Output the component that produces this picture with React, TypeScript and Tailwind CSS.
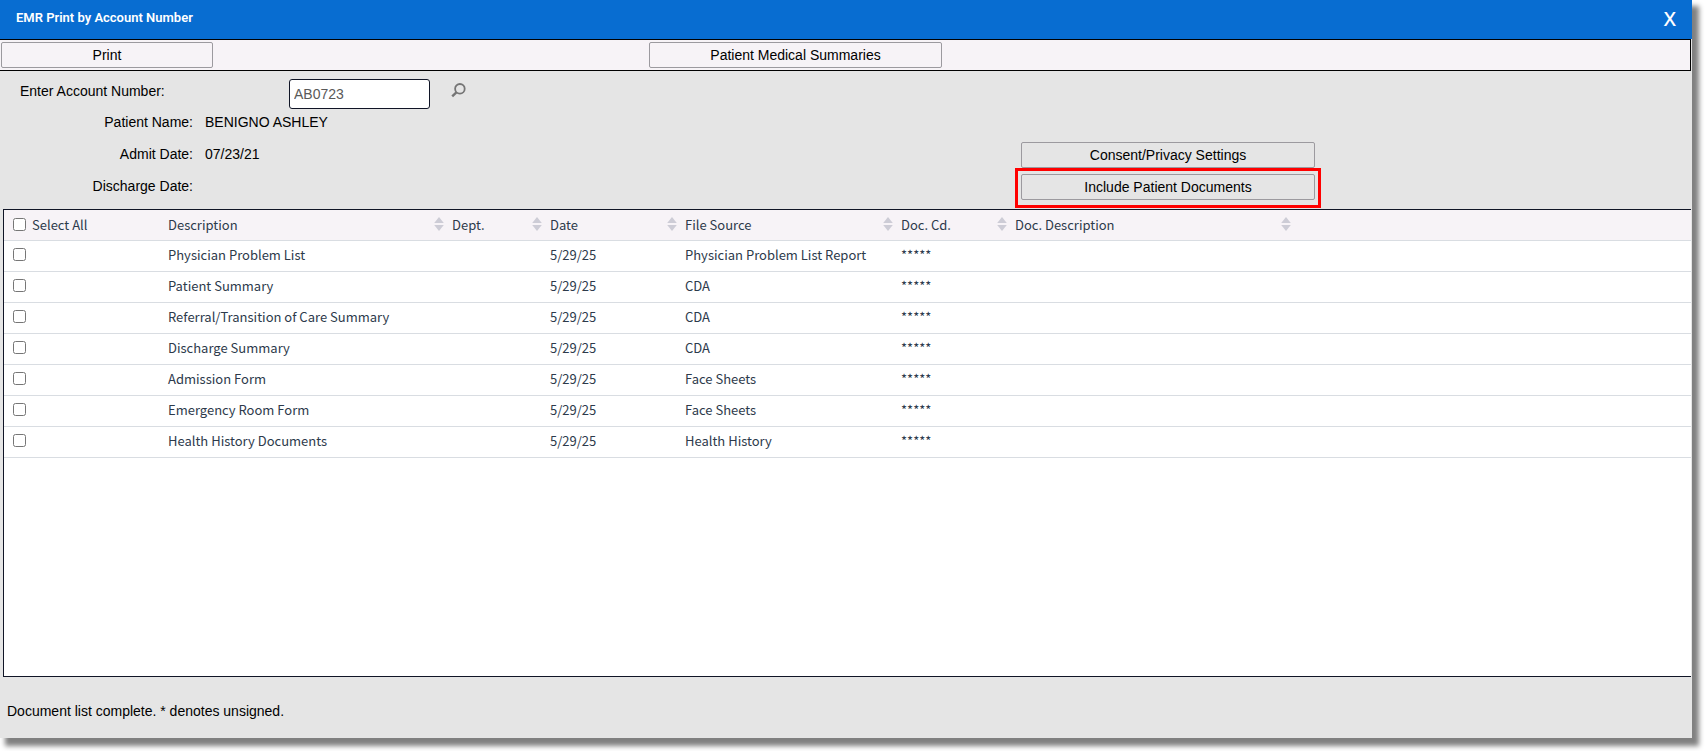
import React, { useState } from "react";

interface DocumentRow {
  description: string;
  dept: string;
  date: string;
  source: string;
  code: string;
  codeDescription: string;
}

const documents: DocumentRow[] = [
  { description: "Physician Problem List", dept: "", date: "5/29/25", source: "Physician Problem List Report", code: "*****", codeDescription: "" },
  { description: "Patient Summary", dept: "", date: "5/29/25", source: "CDA", code: "*****", codeDescription: "" },
  { description: "Referral/Transition of Care Summary", dept: "", date: "5/29/25", source: "CDA", code: "*****", codeDescription: "" },
  { description: "Discharge Summary", dept: "", date: "5/29/25", source: "CDA", code: "*****", codeDescription: "" },
  { description: "Admission Form", dept: "", date: "5/29/25", source: "Face Sheets", code: "*****", codeDescription: "" },
  { description: "Emergency Room Form", dept: "", date: "5/29/25", source: "Face Sheets", code: "*****", codeDescription: "" },
  { description: "Health History Documents", dept: "", date: "5/29/25", source: "Health History", code: "*****", codeDescription: "" },
];

const columns = [
  { label: "Description", width: "w-[284px]" },
  { label: "Dept.", width: "w-[98px]" },
  { label: "Date", width: "w-[135px]" },
  { label: "File Source", width: "w-[216px]" },
  { label: "Doc. Cd.", width: "w-[114px]" },
  { label: "Doc. Description", width: "w-[284px]" },
];

const headCell = "h-[31px] border-b border-[#d9dde2] p-0 font-normal";
const bodyCell = "h-[31px] border-b border-[#d9dde2] px-1 pt-0 pb-[2px]";

const SortIcon = () => (
  <svg width="10" height="14" viewBox="0 0 10 14" fill="#cdccd6" className="mb-[2px]" aria-hidden="true">
    <path d="M5 0 L9.8 6 H0.2 Z" />
    <path d="M5 14 L9.8 8 H0.2 Z" />
  </svg>
);

const SearchIcon = () => (
  <svg width="15" height="15" viewBox="0 0 15 15" fill="none" stroke="#757575" aria-hidden="true">
    <circle cx="8.9" cy="5.8" r="4.8" strokeWidth="1.8" />
    <path d="M5.4 9.4 L1.2 13.4" strokeWidth="2.4" />
  </svg>
);

const ActionButton: React.FC<{ label: string; className: string }> = ({ label, className }) => (
  <button
    type="button"
    className={`h-[26px] rounded-xs border border-[#9c9a9f] text-center leading-4 ${className}`}
  >
    {label}
  </button>
);

const InfoRow: React.FC<{ label: string; value: string }> = ({ label, value }) => (
  <div className="flex h-8 items-center gap-3">
    <dt className="w-[193px] text-right">{label}</dt>
    <dd>{value}</dd>
  </div>
);

const App: React.FC = () => {
  const [account, setAccount] = useState("AB0723");
  const [selected, setSelected] = useState<number[]>([]);

  const toggleRow = (index: number) =>
    setSelected((prev) =>
      prev.includes(index) ? prev.filter((i) => i !== index) : [...prev, index]
    );

  const toggleAll = () =>
    setSelected(selected.length === documents.length ? [] : documents.map((_, i) => i));

  return (
    <div className="h-screen bg-white pr-[13px] pb-[13px] font-['Liberation_Sans',Arial,sans-serif] text-sm text-black">
      <div className="flex h-full flex-col bg-[#e5e5e5] shadow-[6px_7px_5px_1px_#808080]">
        <header className="flex h-[39px] shrink-0 items-center justify-between bg-[#086dd1] px-4 pb-[2px] text-white">
          <h1 className="font-[Roboto,sans-serif] text-[13px] font-semibold">EMR Print by Account Number</h1>
          <button type="button" aria-label="Close" className="font-['Noto_Sans',sans-serif] text-xl leading-6 font-medium">
            X
          </button>
        </header>

        <div className="mr-px flex h-8 shrink-0 items-center border border-l-0 border-black bg-[#f7f3f7] pl-px">
          <ActionButton label="Print" className="w-[212px]" />
          <ActionButton label="Patient Medical Summaries" className="ml-[436px] w-[293px]" />
        </div>

        <section className="flex h-[138px] shrink-0 items-start">
          <div className="w-[1021px]">
            <div className="flex h-[35px] items-start pt-2">
              <label htmlFor="account" className="w-[289px] pt-[2px] pl-5">
                Enter Account Number:
              </label>
              <input
                id="account"
                type="text"
                value={account}
                onChange={(e) => setAccount(e.target.value)}
                className="h-[30px] w-[141px] rounded-[3px] border border-[#101526] bg-white px-1 text-[#595959]"
              />
              <button type="button" aria-label="Search" className="mt-1 ml-[21px]">
                <SearchIcon />
              </button>
            </div>
            <dl>
              <InfoRow label="Patient Name:" value="BENIGNO ASHLEY" />
              <InfoRow label="Admit Date:" value="07/23/21" />
              <InfoRow label="Discharge Date:" value="" />
            </dl>
          </div>
          <div className="flex flex-col gap-[6px] pt-[71px]">
            <ActionButton label="Consent/Privacy Settings" className="w-[294px]" />
            <div className="relative flex">
              <ActionButton label="Include Patient Documents" className="w-[294px]" />
              <div className="pointer-events-none absolute -top-[6px] -right-[6px] -bottom-2 -left-[6px] border-3 border-[#ff0000]" />
            </div>
          </div>
        </section>

        <main className="mr-px ml-[3px] min-h-0 flex-1 border-y border-l border-[#101526] bg-white font-['Noto_Sans_CJK_SC',sans-serif] text-[13px] leading-5 text-[#2d3a4b]">
          <table className="w-full table-fixed border-separate border-spacing-0">
            <thead>
              <tr className="bg-[#f7f3f7] text-left">
                <th className={`${headCell} w-[160px]`}>
                  <label className="flex items-center gap-[6px] pl-[9px]">
                    <input
                      type="checkbox"
                      className="mb-[2px] size-[13px]"
                      checked={selected.length === documents.length}
                      onChange={toggleAll}
                    />
                    Select All
                  </label>
                </th>
                {columns.map((col) => (
                  <th key={col.label} className={`${headCell} ${col.width}`}>
                    <div className="flex items-center justify-between px-1">
                      {col.label}
                      <SortIcon />
                    </div>
                  </th>
                ))}
                <th className={headCell} />
              </tr>
            </thead>
            <tbody>
              {documents.map((doc, index) => (
                <tr key={doc.description}>
                  <td className={bodyCell}>
                    <input
                      type="checkbox"
                      aria-label={doc.description}
                      className="mb-[2px] ml-[5px] block size-[13px]"
                      checked={selected.includes(index)}
                      onChange={() => toggleRow(index)}
                    />
                  </td>
                  <td className={bodyCell}>{doc.description}</td>
                  <td className={bodyCell}>{doc.dept}</td>
                  <td className={bodyCell}>{doc.date}</td>
                  <td className={bodyCell}>{doc.source}</td>
                  <td className={bodyCell}>{doc.code}</td>
                  <td className={bodyCell}>{doc.codeDescription}</td>
                  <td className={bodyCell} />
                </tr>
              ))}
            </tbody>
          </table>
        </main>

        <footer className="flex h-[61px] shrink-0 items-center pt-[7px] pl-[7px]">
          Document list complete. * denotes unsigned.
        </footer>
      </div>
    </div>
  );
};

export default App;
